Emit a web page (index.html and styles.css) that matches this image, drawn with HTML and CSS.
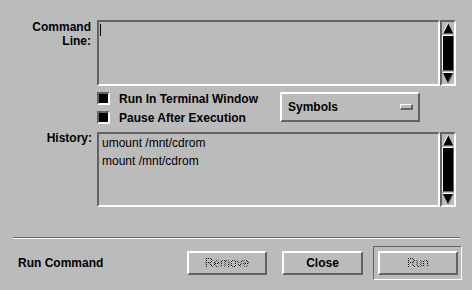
FILE: index.html
```html
<!DOCTYPE html>
<html>
<head>
<meta charset="utf-8">
<link rel="stylesheet" href="styles.css">
</head>
<body>
<div class="dialog">
  <div class="grid">
    <div class="label cmd-label">Command<br>Line:</div>
    <div class="field cmd-field">
      <div class="text"><span class="cursor"></span></div>
      <div class="sb">
        <svg class="arrow" width="12" height="12" viewBox="0 0 12 12"><polygon points="6,1 11,11 1,11" fill="#000"/><line x1="1" y1="11" x2="6" y2="1" stroke="#fff" stroke-width="1"/><line x1="1" y1="11.5" x2="11" y2="11.5" stroke="#636363"/></svg>
        <div class="thumb"></div>
        <svg class="arrow" width="12" height="12" viewBox="0 0 12 12"><polygon points="1,1 11,1 6,11" fill="#000"/><line x1="1" y1="0.5" x2="11" y2="0.5" stroke="#fff"/><line x1="11" y1="1" x2="6" y2="11" stroke="#636363"/></svg>
      </div>
    </div>
    <div></div>
    <div class="options">
      <div class="checks">
        <div class="check"><span class="box"></span><span>Run In Terminal Window</span></div>
        <div class="check"><span class="box"></span><span>Pause After Execution</span></div>
      </div>
      <div class="menu"><span>Symbols</span><span class="ind"></span></div>
    </div>
    <div class="label hist-label">History:</div>
    <div class="field hist-field">
      <div class="text list">
        <div class="item">umount /mnt/cdrom</div>
        <div class="item">mount /mnt/cdrom</div>
      </div>
      <div class="sb">
        <svg class="arrow" width="12" height="12" viewBox="0 0 12 12"><polygon points="6,1 11,11 1,11" fill="#000"/><line x1="1" y1="11" x2="6" y2="1" stroke="#fff" stroke-width="1"/><line x1="1" y1="11.5" x2="11" y2="11.5" stroke="#636363"/></svg>
        <div class="thumb"></div>
        <svg class="arrow" width="12" height="12" viewBox="0 0 12 12"><polygon points="1,1 11,1 6,11" fill="#000"/><line x1="1" y1="0.5" x2="11" y2="0.5" stroke="#fff"/><line x1="11" y1="1" x2="6" y2="11" stroke="#636363"/></svg>
      </div>
    </div>
  </div>
  <div class="sep"></div>
  <div class="actions">
    <div class="title">Run Command</div>
    <div class="btn remove"><span class="stipple">Remove</span></div>
    <div class="btn close">Close</div>
    <div class="default-ring"><div class="btn run"><span class="stipple">Run</span></div></div>
  </div>
</div>
</body>
</html>
```

FILE: styles.css
```css
html, body {
  margin: 0;
  padding: 0;
  background: #bbbbbb;
}
body {
  width: 472px;
  height: 290px;
  overflow: hidden;
  font-family: "Liberation Sans", Arial, sans-serif;
  font-size: 12px;
  color: #000;
}
.dialog {
  padding-top: 20px;
}
.grid {
  display: grid;
  grid-template-columns: 97px 359px;
}
.label {
  font-weight: bold;
  text-align: right;
  padding-right: 6px;
  line-height: 14px;
}
.hist-label {
  margin-top: 7px;
  padding-right: 5px;
}
.field {
  display: flex;
}
.cmd-field {
  height: 66px;
}
.hist-field {
  height: 75px;
  margin-top: 8px;
}
.text {
  flex: 1;
  box-sizing: border-box;
  border-style: solid;
  border-width: 2px;
  border-color: #636363 #ffffff #ffffff #636363;
}
.cursor {
  display: block;
  width: 1px;
  height: 12px;
  background: #000;
  margin: 2px 0 0 1px;
}
.sb {
  width: 16px;
  box-sizing: border-box;
  border-style: solid;
  border-width: 2px;
  border-color: #636363 #ffffff #ffffff #636363;
  display: flex;
  flex-direction: column;
}
.arrow {
  display: block;
  flex: none;
}
.thumb {
  flex: 1;
  margin: 1px 0;
  border-style: solid;
  border-width: 1px;
  border-color: #ffffff #636363 #636363 #ffffff;
  background: #000;
}
.options {
  display: flex;
  margin-top: 6px;
}
.checks {
  width: 183px;
  display: flex;
  flex-direction: column;
  gap: 6px;
}
.check {
  display: flex;
  align-items: center;
  height: 13px;
  gap: 9px;
  font-weight: bold;
  white-space: nowrap;
}
.box {
  width: 13px;
  height: 13px;
  box-sizing: border-box;
  border-style: solid;
  border-width: 2px;
  border-color: #636363 #ffffff #ffffff #636363;
  background: #000;
  flex: none;
}
.menu {
  width: 140px;
  height: 30px;
  box-sizing: border-box;
  border-style: solid;
  border-width: 2px;
  border-color: #ffffff #636363 #636363 #ffffff;
  display: flex;
  align-items: center;
  justify-content: space-between;
  padding: 0 5px 0 6px;
  font-weight: bold;
}
.ind {
  width: 13px;
  height: 6px;
  box-sizing: border-box;
  border-style: solid;
  border-width: 1px 2px 2px 1px;
  border-color: #ffffff #636363 #636363 #ffffff;
}
.list {
  padding: 0 0 0 3px;
}
.item {
  line-height: 18px;
  white-space: nowrap;
}
.sep {
  margin: 30px 0 0 13px;
  width: 447px;
  border-top: 1px solid #636363;
  border-bottom: 1px solid #ffffff;
}
.actions {
  display: flex;
  align-items: center;
  margin-top: 7px;
  height: 34px;
}
.title {
  flex: 1;
  padding-left: 18px;
  font-weight: bold;
}
.btn {
  box-sizing: border-box;
  height: 24px;
  width: 80px;
  border-style: solid;
  border-width: 2px;
  border-color: #ffffff #636363 #636363 #ffffff;
  display: flex;
  align-items: center;
  justify-content: center;
}
.remove {
  margin-right: 15px;
}
.close {
  width: 81px;
  margin-right: 10px;
  font-weight: bold;
}
.default-ring {
  box-sizing: border-box;
  width: 89px;
  height: 34px;
  border-style: solid;
  border-width: 1px;
  border-color: #636363 #ffffff #ffffff #636363;
  padding: 4px 3px 4px 4px;
  margin-right: 10px;
}
.stipple {
  background: repeating-conic-gradient(#000 0% 25%, transparent 0% 50%) 0 0 / 2px 2px;
  -webkit-background-clip: text;
  background-clip: text;
  color: transparent;
}
```
